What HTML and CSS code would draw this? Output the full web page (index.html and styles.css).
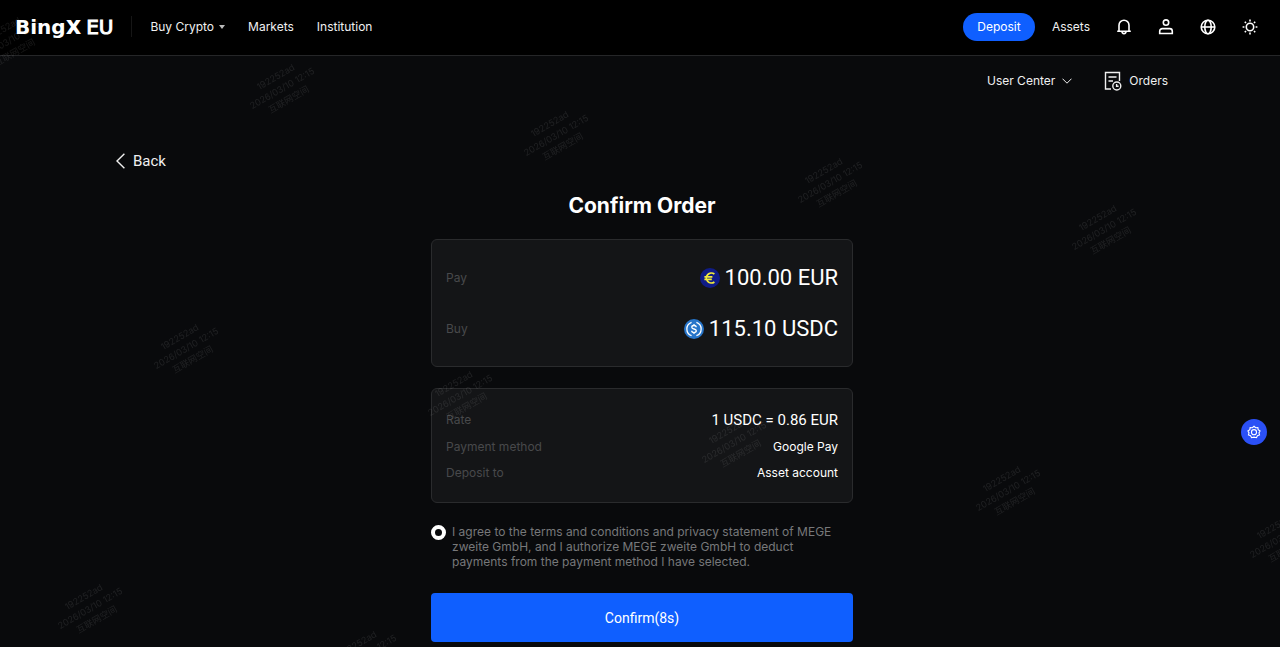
FILE: index.html
```html
<!DOCTYPE html>
<html lang="en">
<head>
    <meta charset="UTF-8">
    <meta name="viewport" content="width=device-width, initial-scale=1.0">
    <title>Confirm Order</title>
    <link rel="stylesheet" href="styles.css">
</head>
<body>
    <!-- Top Bar -->
    <header class="topbar">
        <a href="#" class="logo"><b>Bing<span class="logo-x">x</span></b><span class="logo-region">EU</span></a>
        <nav class="main-nav">
            <a href="#">Buy Crypto <i class="caret"></i></a>
            <a href="#">Markets</a>
            <a href="#">Institution</a>
        </nav>
        <div class="actions">
            <button class="deposit-btn">Deposit</button>
            <a href="#">Assets</a>
            <button class="icon-btn" aria-label="Notifications">
                <svg viewBox="0 0 16 16"><path d="M1.2 12.2h13.6M3 12V6.2a5 5 0 0 1 10 0V12"/><path d="M6 12.6a2 2 0 0 0 4 0"/></svg>
            </button>
            <button class="icon-btn" aria-label="Account">
                <svg viewBox="0 0 16 16"><circle cx="8" cy="3.6" r="2.7"/><path d="M1.7 14.5v-2.3a2.6 2.6 0 0 1 2.6-2.6h7.4a2.6 2.6 0 0 1 2.6 2.6v2.3z"/></svg>
            </button>
            <button class="icon-btn" aria-label="Language">
                <svg viewBox="0 0 16 16"><circle cx="8" cy="8" r="6.8"/><ellipse cx="8" cy="8" rx="3.2" ry="6.8"/><path d="M1.2 8h13.6"/></svg>
            </button>
            <button class="icon-btn" aria-label="Theme">
                <svg viewBox="0 0 16 16"><circle cx="8" cy="8" r="3.7"/><path d="M8 .6v1.8M8 13.6v1.8M.6 8h1.8M13.6 8h1.8M2.8 2.8l1.2 1.2M12 12l1.2 1.2M2.8 13.2L4 12M12 4l1.2-1.2"/></svg>
            </button>
        </div>
    </header>

    <!-- Sub Navigation -->
    <nav class="subnav">
        <a href="#">User Center
            <svg class="chevron" viewBox="0 0 10 6"><path d="M.5.7L5 5.2 9.5.7"/></svg>
        </a>
        <a href="#">
            <svg class="orders-icon" viewBox="0 0 18 20"><path d="M7 18H1.5V1.5h14V10M4.5 6h8M4.5 10h4.5"/><circle cx="12.8" cy="15" r="4"/><path d="M12.6 12.9v2.3h2"/></svg>
            Orders
        </a>
    </nav>

    <!-- Main Content -->
    <main class="content">
        <a href="#" class="back">
            <svg viewBox="0 0 9 16"><path d="M8.4.8L1 8l7.4 7.2"/></svg>
            Back
        </a>

        <form class="order">
            <h1>Confirm Order</h1>

            <dl class="card amounts">
                <div class="row">
                    <dt>Pay</dt>
                    <dd>
                        <svg viewBox="0 0 20 20"><circle cx="10" cy="10" r="10" fill="#101c86"/><path d="M14.4 6A5 5 0 1 0 14.4 14M4.4 8.8h8M4.4 11.3h7.4" fill="none" stroke="#f2ea3a" stroke-width="1.7"/></svg>
                        100.00 EUR
                    </dd>
                </div>
                <div class="row">
                    <dt>Buy</dt>
                    <dd>
                        <svg viewBox="0 0 20 20"><circle cx="10" cy="10" r="10" fill="#2775ca"/><g fill="none" stroke="#fff" stroke-width="1.3"><path d="M7.6 3.3a7.1 7.1 0 0 0 0 13.4M12.4 3.3a7.1 7.1 0 0 1 0 13.4"/><path d="M12.2 8.2c0-1.2-.9-1.7-2.2-1.7s-2.2.6-2.2 1.7c0 2.4 4.5 1.2 4.5 3.6 0 1.2-1 1.8-2.3 1.8s-2.3-.6-2.3-1.8M10 5v1.5M10 13.6v1.5"/></g></svg>
                        115.10 USDC
                    </dd>
                </div>
            </dl>

            <dl class="card details">
                <div class="row rate"><dt>Rate</dt><dd>1 USDC = 0.86 EUR</dd></div>
                <div class="row"><dt>Payment method</dt><dd>Google Pay</dd></div>
                <div class="row"><dt>Deposit to</dt><dd>Asset account</dd></div>
            </dl>

            <div class="agreement">
                <input type="radio" id="agree" name="agree">
                <label for="agree">I agree to the terms and conditions and privacy statement of MEGE zweite GmbH, and I authorize MEGE zweite GmbH to deduct payments from the payment method I have selected.</label>
            </div>

            <button type="button" class="confirm-btn">Confirm(8s)</button>
        </form>
    </main>

    <button class="settings-btn" aria-label="Settings">
        <svg viewBox="0 0 16 16"><path d="M8 1.4l1.8 1.7 2.6-.2.4 2.5 2.1 1.4L13.7 9l.6 2.4-2.4.9-1.1 2.2L8 13.8l-2.8.7-1.1-2.2-2.4-.9L2.3 9 1.1 6.8l2.1-1.4.4-2.5 2.6.2z"/><circle cx="8" cy="8.2" r="2.9"/></svg>
    </button>

    <!-- Watermark -->
    <div class="watermark" id="watermark" aria-hidden="true"></div>

    <script>
        const watermark = document.getElementById('watermark');
        const marks = [
            [8, 41], [282, 88], [556, 135], [830, 182], [1104, 229],
            [186, 348], [460, 395], [734, 442], [1008, 490], [1282, 537],
            [90, 608], [364, 655]
        ];

        marks.forEach(function([x, y]) {
            const mark = document.createElement('div');
            mark.className = 'mark';
            mark.style.left = x + 'px';
            mark.style.top = y + 'px';
            mark.innerHTML = '192252ad<br>2026/03/10 12:15<br>互联网空间';
            watermark.appendChild(mark);
        });
    </script>
</body>
</html>
```
FILE: styles.css
```css
/* General Styles */
* {
    box-sizing: border-box;
}

body {
    margin: 0;
    background-color: #090a0c;
    color: #f0f0f0;
    font-family: Inter, "Noto Sans CJK SC", sans-serif;
    font-size: 12px;
    line-height: 16px;
}

a {
    color: inherit;
    text-decoration: none;
}

button {
    font-family: inherit;
    color: #fff;
    border: none;
    padding: 0;
    cursor: pointer;
}

svg {
    display: block;
    flex: none;
    fill: none;
    stroke: currentColor;
}

/* Top Bar */
.topbar {
    display: flex;
    align-items: center;
    height: 56px;
    padding: 0 22px 2px 15px;
    background-color: #000;
    border-bottom: 1px solid #252628;
}

.logo {
    display: flex;
    align-items: baseline;
    gap: 5px;
    padding-right: 18px;
    border-right: 1px solid #161616;
    font-family: "DejaVu Sans", sans-serif;
    font-size: 20px;
    line-height: 20px;
    color: #fff;
}

.logo-x {
    font-size: 24px;
}

.logo-region {
    -webkit-text-stroke: 1px #fff;
}

.main-nav {
    display: flex;
    gap: 23px;
    padding-left: 18px;
}

.main-nav a {
    display: flex;
    align-items: center;
    gap: 5px;
}

.caret {
    border: 3px solid transparent;
    border-top: 4px solid #bbb;
    border-bottom: 0;
}

.actions {
    display: flex;
    align-items: center;
    margin-left: auto;
}

.deposit-btn {
    width: 72px;
    height: 28px;
    margin-right: 17px;
    border-radius: 14px;
    background-color: #0f5fff;
    font-size: 12px;
}

.icon-btn {
    margin-left: 26px;
    background: none;
}

.icon-btn svg {
    width: 16px;
    height: 16px;
    stroke-width: 1.6;
}

/* Sub Navigation */
.subnav {
    display: flex;
    justify-content: flex-end;
    gap: 32px;
    padding: 15px 112px 0;
}

.subnav a {
    display: flex;
    align-items: center;
    gap: 7px;
}

.chevron {
    width: 10px;
    height: 6px;
}

.orders-icon {
    width: 18px;
    height: 20px;
    stroke-width: 1.4;
}

/* Main Content */
.content {
    padding: 62px 112px 5px 116px;
}

.back {
    display: inline-flex;
    align-items: center;
    gap: 8px;
    font-family: Roboto, sans-serif;
    font-size: 15px;
}

.back svg {
    width: 9px;
    height: 16px;
    stroke-width: 1.4;
}

.order {
    max-width: 422px;
    margin: 20px auto 0;
}

.order h1 {
    margin: 0 0 20px;
    font-size: 21px;
    font-weight: 700;
    line-height: 26px;
    text-align: center;
    color: #fff;
}

.card {
    display: flex;
    flex-direction: column;
    margin: 0 0 21px;
    border: 1px solid #2a2b2d;
    border-radius: 6px;
    background-color: #141517;
}

.row {
    display: flex;
    justify-content: space-between;
    align-items: center;
}

.row dt {
    color: #48494b;
}

.row dd {
    display: flex;
    align-items: center;
    gap: 5px;
    margin: 0;
    color: #fff;
}

.amounts {
    gap: 25px;
    padding: 25px 14px 24px;
}

.amounts dd {
    font-family: Roboto, sans-serif;
    font-size: 22px;
    line-height: 26px;
}

.amounts svg {
    width: 20px;
    height: 20px;
    stroke: none;
}

.details {
    gap: 10px;
    padding: 22px 14px 21px;
}

.rate dd {
    font-family: Roboto, sans-serif;
    font-size: 15px;
    line-height: 18px;
}

.agreement {
    display: flex;
    align-items: flex-start;
    gap: 6px;
    margin-bottom: 24px;
}

.agreement label {
    padding-right: 10px;
    line-height: 15px;
    color: #77787a;
}

.agreement input {
    flex: none;
    appearance: none;
    width: 15px;
    height: 15px;
    margin: 1px 0 0;
    border: 4px solid #fff;
    border-radius: 50%;
}

.confirm-btn {
    display: block;
    width: 100%;
    height: 49px;
    border-radius: 4px;
    background-color: #0f5fff;
    font-family: Roboto, sans-serif;
    font-size: 14px;
}

/* Floating Button */
.settings-btn {
    position: fixed;
    right: 13px;
    top: 419px;
    display: flex;
    align-items: center;
    justify-content: center;
    width: 26px;
    height: 26px;
    border-radius: 50%;
    background-color: #2b50f6;
}

.settings-btn svg {
    width: 14px;
    height: 14px;
    stroke-width: 1.3;
}

/* Watermark */
.watermark {
    position: fixed;
    inset: 0;
    overflow: hidden;
    pointer-events: none;
}

.mark {
    position: absolute;
    transform: translate(-50%, -50%) rotate(-30deg);
    font-size: 9px;
    line-height: 13px;
    text-align: center;
    white-space: nowrap;
    color: rgba(255, 255, 255, 0.09);
}
```
